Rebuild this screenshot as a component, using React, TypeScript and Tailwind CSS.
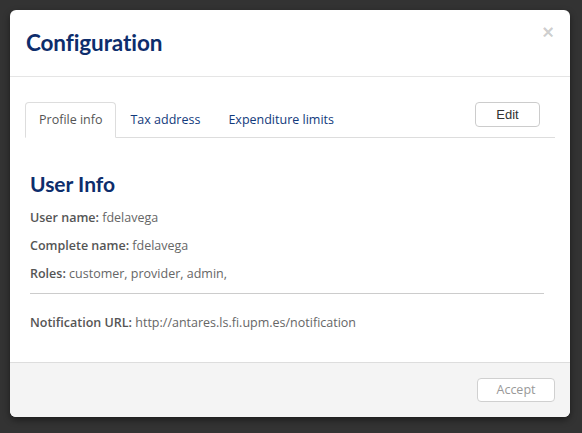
export default function App() {
  const rows = [
    { label: 'User name:', value: 'fdelavega' },
    { label: 'Complete name:', value: 'fdelavega' },
    { label: 'Roles:', value: 'customer, provider, admin,' },
  ];

  return (
    <div className="min-h-[433px] bg-[#333333] pl-[10px] pt-[10px] font-['Open_Sans',sans-serif]">
      <div className="w-[560px] h-[407px] bg-white rounded-[6px] shadow-[0_3px_7px_rgba(0,0,0,0.45)] flex flex-col overflow-hidden">
        {/* Header */}
        <div className="h-[67px] shrink-0 border-b border-[#e5e5e5] flex justify-between pl-[16px] pr-[16px]">
          <h3 className="pt-[20px] text-[22.5px] leading-[26px] font-bold text-[#0d2d6c] font-['Lato',sans-serif] tracking-[-0.1px]">
            Configuration
          </h3>
          <button className="mt-[11px] h-[22px] text-[20px] leading-[20px] font-bold text-black/20 font-['Liberation_Sans',sans-serif]">
            ×
          </button>
        </div>

        {/* Body */}
        <div className="flex-1 px-[15px] pt-[25px]">
          <div className="flex border-b border-[#dddddd] h-[36px]">
            <div className="h-[36px] -mb-px px-[13px] border border-[#dddddd] border-b-white rounded-t-[4px] bg-white text-[12.5px] leading-[34px] text-[#555555]">
              Profile info
            </div>
            <div className="h-[36px] px-[13px] border border-transparent text-[12.5px] leading-[34px] text-[#123a7c]">
              Tax address
            </div>
            <div className="h-[36px] px-[13px] border border-transparent text-[12.5px] leading-[34px] text-[#123a7c]">
              Expenditure limits
            </div>
            <button className="ml-auto mr-[15px] w-[65px] h-[25px] border border-[#cccccc] rounded-[4px] bg-white text-[13px] text-[#333333] font-['Liberation_Sans',sans-serif]">
              Edit
            </button>
          </div>

          <div className="pl-[5px] pt-[34px]">
            <h4 className="text-[21px] leading-[24px] font-bold text-[#0d2d6c] font-['Lato',sans-serif] mb-[13px]">
              User Info
            </h4>
            {rows.map(r => (
              <p key={r.label} className="text-[12.5px] leading-[18px] mb-[10px] text-[#666666]">
                <span className="font-semibold text-[#555555]">{r.label}</span> {r.value}
              </p>
            ))}
            <hr className="w-[514px] border-0 border-t border-[#cccccc] mt-[1px] mb-[20px]" />
            <p className="text-[12.5px] leading-[18px] text-[#666666]">
              <span className="font-semibold text-[#555555]">Notification URL:</span>{' '}
              http://antares.ls.fi.upm.es/notification
            </p>
          </div>
        </div>

        {/* Footer */}
        <div className="h-[55px] shrink-0 bg-[#f4f4f4] border-t border-[#dddddd] flex justify-end items-start pt-[15px] pr-[15px]">
          <button className="w-[78px] h-[24px] bg-white border border-[#d0d0d0] rounded-[4px] text-[12.5px] text-[#999999]">
            Accept
          </button>
        </div>
      </div>
    </div>
  );
}
